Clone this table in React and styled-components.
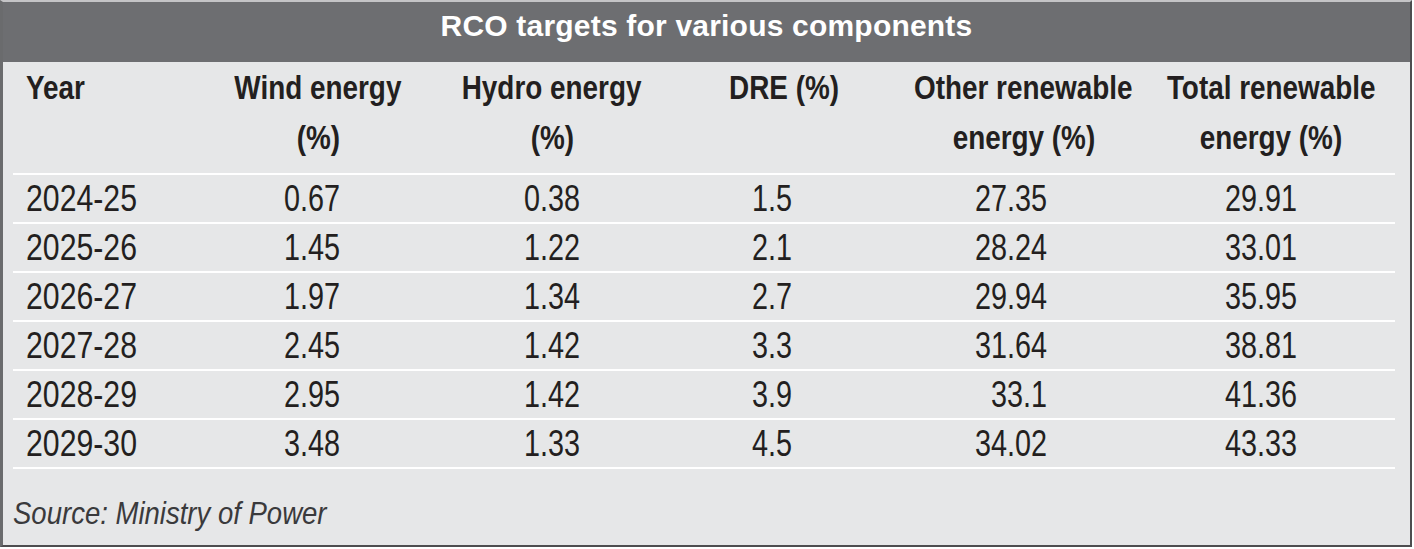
import React from 'react'
import styled, { createGlobalStyle } from 'styled-components'

const GlobalStyle = createGlobalStyle`
  html, body {
    margin: 0;
    padding: 0;
    background: #ffffff;
  }
`;

// no condensed face is installed, so text is squeezed horizontally
const sans = `"Liberation Sans", Arial, sans-serif`;

// col widths, header is centred, numbers sit right with a padding
const columns = [
  { width: 187, pr: 0 },
  { width: 236, pr: 96 },
  { width: 232, pr: 88 },
  { width: 232, pr: 108 },
  { width: 247, pr: 100 },
  { width: 248, pr: 98 },
];

const headers = [
  ['Year'],
  ['Wind energy', '(%)'],
  ['Hydro energy', '(%)'],
  ['DRE (%)'],
  ['Other renewable', 'energy (%)'],
  ['Total renewable', 'energy (%)'],
];

const rows = [
  ['2024-25', '0.67', '0.38', '1.5', '27.35', '29.91'],
  ['2025-26', '1.45', '1.22', '2.1', '28.24', '33.01'],
  ['2026-27', '1.97', '1.34', '2.7', '29.94', '35.95'],
  ['2027-28', '2.45', '1.42', '3.3', '31.64', '38.81'],
  ['2028-29', '2.95', '1.42', '3.9', '33.1', '41.36'],
  ['2029-30', '3.48', '1.33', '4.5', '34.02', '43.33'],
];

export default function App() {
  return (
    <>
      <GlobalStyle />
      <Frame>
        <TitleBar>RCO targets for various components</TitleBar>
        <Body>
          <HeadRow>
            {headers.map((lines, i) => (
              <HeadCell key={i} first={i === 0}>
                {lines.map(l => (
                  <Squeeze key={l} origin={i === 0 ? 'left' : 'center'} scale={0.82}>{l}</Squeeze>
                ))}
              </HeadCell>
            ))}
          </HeadRow>
          {rows.map(r => (
            <DataRow key={r[0]}>
              {r.map((v, i) => (
                <Cell key={i} first={i === 0} pr={columns[i].pr}>
                  <Squeeze origin={i === 0 ? 'left' : 'right'} scale={i === 0 ? 0.84 : 0.8}>{v}</Squeeze>
                </Cell>
              ))}
            </DataRow>
          ))}
          <Source>
            <Squeeze origin="left" scale={0.86}>Source: Ministry of Power</Squeeze>
          </Source>
        </Body>
      </Frame>
    </>
  );
}

const gridCols = columns.map(c => `${c.width}px`).join(' ');

const Squeeze = styled.span`
  display: inline-block;
  white-space: nowrap;
  transform: scaleX(${p => p.scale});
  transform-origin: ${p => p.origin} center;
`;

const Frame = styled.div`
  width: 1412px;
  box-sizing: border-box;
  border: 2px solid #4d4d4f;
  border-top-color: #c4c4c6;
  border-left-width: 3px;
  border-left-color: #6a6b6d;
  background: #e6e7e8;
`;

const TitleBar = styled.div`
  height: 60px;
  box-sizing: border-box;
  padding-top: 9px;
  background: #6d6e71;
  color: #ffffff;
  text-align: center;
  font-family: ${sans};
  font-weight: bold;
  font-size: 30px;
  line-height: 1;
  letter-spacing: 0.2px;
`;

const Body = styled.div`
  padding: 0 15px 0 10px;
  color: #231f20;
`;

const HeadRow = styled.div`
  display: grid;
  grid-template-columns: ${gridCols};
  padding-bottom: 11px;
`;

const HeadCell = styled.div`
  display: flex;
  flex-direction: column;
  align-items: ${p => p.first ? 'flex-start' : 'center'};
  padding-left: ${p => p.first ? '13px' : '0'};
  font-family: ${sans};
  font-weight: bold;
  font-size: 34px;
  line-height: 50px;
`;

const DataRow = styled.div`
  display: grid;
  grid-template-columns: ${gridCols};
  height: 47px;
  align-items: center;
  border-top: 2px solid #ffffff;
  &:last-of-type {
    border-bottom: 2px solid #ffffff;
  }
`;

const Cell = styled.div`
  font-family: ${sans};
  font-size: 36px;
  line-height: 47px;
  white-space: nowrap;
  text-align: ${p => p.first ? 'left' : 'right'};
  padding-left: ${p => p.first ? '13px' : '0'};
  padding-right: ${p => p.pr}px;
`;

const Source = styled.div`
  border-top: 2px solid #ffffff;
  padding: 28px 0 16px 0;
  font-family: ${sans};
  font-style: italic;
  font-size: 32px;
  line-height: 32px;
  color: #3a3a3c;
`;
